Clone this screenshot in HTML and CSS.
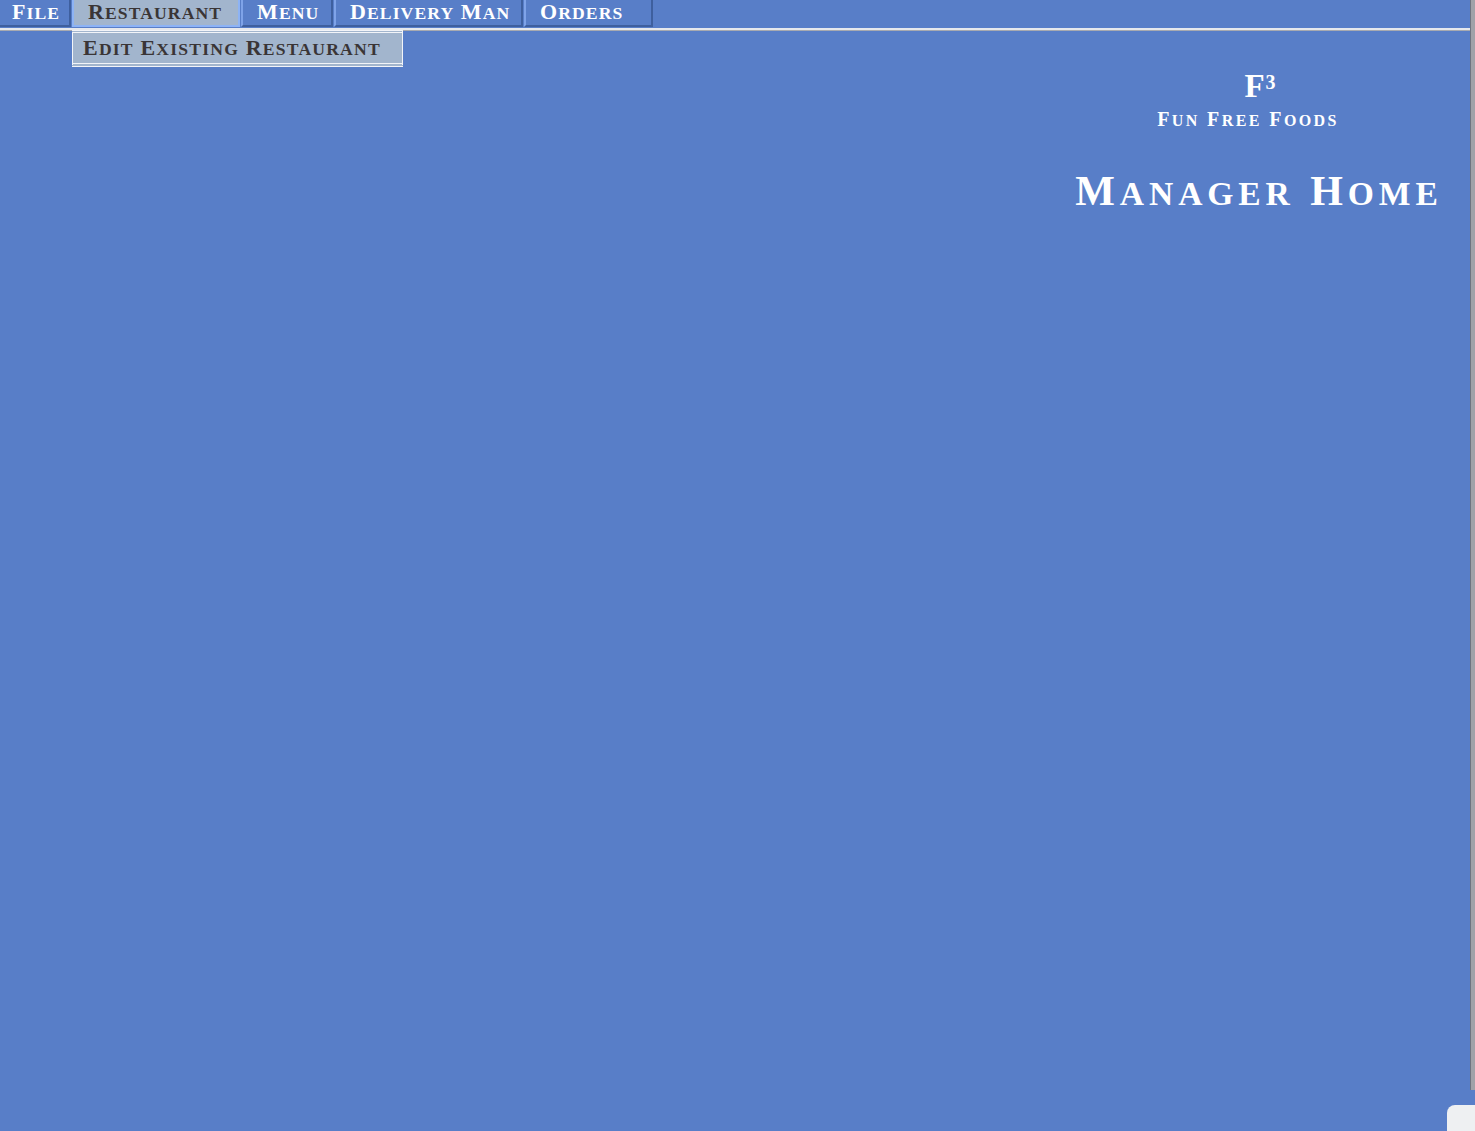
FILE: index.html
```html
<!DOCTYPE html>
<html>
<head>
<meta charset="utf-8">
<title>Manager Home</title>
<link rel="stylesheet" href="styles.css">
</head>
<body>
<div class="frame">
  <div class="main">
    <nav class="menubar">
      <div class="item w-file">F<span class="s">ile</span></div>
      <div class="item w-rest active">R<span class="s">estaurant</span>
        <div class="dropdown">
          <div class="drop-item">E<span class="s">dit</span> E<span class="s">xisting</span> R<span class="s">estaurant</span></div>
        </div>
      </div>
      <div class="item w-menu">M<span class="s">enu</span></div>
      <div class="item w-del">D<span class="s">elivery</span> M<span class="s">an</span></div>
      <div class="item w-ord">O<span class="s">rders</span></div>
    </nav>
    <div class="rule"></div>
    <header class="brand">
      <div class="logo">F<span class="sup">3</span></div>
      <div class="tagline">F<span class="s">un</span> F<span class="s">ree</span> F<span class="s">oods</span></div>
      <h1 class="title">M<span class="s">anager</span> H<span class="s">ome</span></h1>
    </header>
  </div>
  <div class="edge"></div>
  <div class="corner"></div>
</div>
</body>
</html>
```

FILE: styles.css
```css
html, body {
  margin: 0;
  padding: 0;
  height: 100%;
}
body {
  background: #587ec8;
  font-family: "Liberation Serif", "Times New Roman", serif;
  font-weight: bold;
  color: #ffffff;
  overflow: hidden;
  text-transform: uppercase;
}
.s {
  font-size: 0.8em;
  line-height: 1;
}
.frame {
  display: flex;
  height: 1131px;
  position: relative;
}
.main {
  flex: 1;
  display: flex;
  flex-direction: column;
}
.edge {
  width: 4px;
  background: #a0a2a8;
  border-left: 1px solid #6e7480;
  height: 1090px;
}
.menubar {
  display: flex;
  height: 27px;
}
.item {
  position: relative;
  box-sizing: border-box;
  height: 27px;
  padding: 0 0 0 14px;
  font-size: 22px;
  line-height: 24px;
  letter-spacing: 1.1px;
  border-left: 2px solid #7fa3e8;
  border-right: 2px solid #3e5f9e;
  border-bottom: 2px solid #3e5f9e;
  margin-right: 1px;
  white-space: nowrap;
}
.item:first-child {
  border-left: none;
  padding-left: 12px;
}
.w-file { width: 71px; }
.w-rest { width: 168px; }
.w-menu { width: 92px; }
.w-del { width: 189px; }
.w-ord { width: 129px; }
.item.active {
  background: #a2b5cd;
  color: #3a3536;
  border-color: #8db3f5;
}
.dropdown {
  position: absolute;
  left: -2px;
  top: 30px;
  width: 331px;
  box-sizing: border-box;
  background: #a2b5cd;
  border-top: 3px double #f2f4f8;
  border-bottom: 4px double #f2f4f8;
  border-left: 1px solid #f2f4f8;
  border-right: 1px solid #f2f4f8;
  z-index: 2;
}
.drop-item {
  height: 30px;
  padding-left: 10px;
  font-size: 22px;
  line-height: 30px;
  color: #3a3536;
  letter-spacing: 1.2px;
}
.rule {
  height: 2px;
  margin-top: 1px;
  background: #e6e8ec;
  border-bottom: 1px solid #a8aab0;
}
.brand {
  align-self: flex-end;
  width: 400px;
  margin-right: 11px;
  text-align: center;
  margin-top: 37px;
}
.logo {
  font-size: 33px;
  line-height: 36px;
  padding-left: 2px;
}
.logo .sup {
  font-size: 20px;
  line-height: 1;
  vertical-align: 8px;
  margin-left: 1px;
}
.tagline {
  font-size: 20px;
  line-height: 24px;
  letter-spacing: 2.4px;
  margin-top: 3px;
  padding-right: 22px;
}
.title {
  margin: 36px 0 0 0;
  font-size: 42px;
  line-height: 48px;
  font-weight: bold;
  letter-spacing: 4.9px;
}
.corner {
  position: absolute;
  right: 0;
  bottom: 0;
  width: 28px;
  height: 26px;
  background: #eef0f2;
  border-top-left-radius: 8px;
}
```
